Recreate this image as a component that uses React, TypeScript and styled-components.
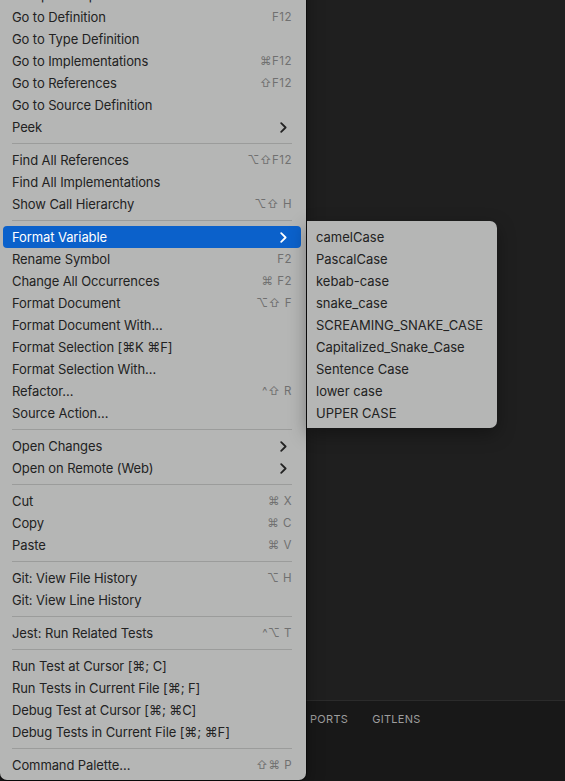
import React from "react";
import styled, { createGlobalStyle } from "styled-components";

const Global = createGlobalStyle`
  html, body { margin: 0; padding: 0; background: #1f1f1f; }
  body { font-family: Inter, "Noto Sans", "DejaVu Sans", sans-serif; }
`;

const Screen = styled.div`
  position: relative;
  width: 565px;
  height: 781px;
  overflow: hidden;
  display: flex;
  flex-direction: column;
  background: #1f1f1f;
`;

const Editor = styled.div`
  flex: 1;
  background: #1f1f1f;
`;

const Panel = styled.div`
  height: 80px;
  border-top: 1px solid #2b2b2b;
  background: #181818;
`;

const PanelTabs = styled.div`
  display: flex;
  gap: 24px;
  padding: 11px 0 0 310px;
  font-family: Inter, "Noto Sans", sans-serif;
  font-size: 11px;
  letter-spacing: 0.3px;
  color: #9d9d9d;
`;

const Menu = styled.div`
  position: absolute;
  left: 0;
  top: -20px;
  width: 306px;
  box-sizing: border-box;
  padding: 4px 5px 4px 3px;
  background: #b5b6b5;
  border-radius: 0 0 7px 7px;
  box-shadow: 0 0 0 1px rgba(0, 0, 0, 0.45), 0 6px 18px rgba(0, 0, 0, 0.35);
`;

const SubMenu = styled.div`
  position: absolute;
  left: 307px;
  top: 221px;
  width: 190px;
  box-sizing: border-box;
  padding: 5px 4px 4px 0;
  background: #b5b6b5;
  border-radius: 0 7px 7px 0;
  box-shadow: 0 6px 18px rgba(0, 0, 0, 0.35);
`;

const Row = styled.div<{ $active?: boolean }>`
  height: 22px;
  display: flex;
  align-items: center;
  padding: 0 9px;
  border-radius: 4px;
  font-size: 13px;
  letter-spacing: -0.1px;
  color: ${(p) => (p.$active ? "#ffffff" : "#222222")};
  background: ${(p) => (p.$active ? "#0b61cb" : "transparent")};
  white-space: nowrap;
`;

const SubRow = styled(Row)`
  letter-spacing: 0;
`;

const Label = styled.span`
  flex: 1;
`;

const Shortcut = styled.span`
  font-size: 11.5px;
  color: #707070;
  font-family: Inter, "DejaVu Sans", sans-serif;
  letter-spacing: 0.5px;
`;

const Sep = styled.div`
  height: 11px;
  display: flex;
  align-items: center;
  padding: 0 9px;
  &::after {
    content: "";
    flex: 1;
    height: 1px;
    background: rgba(0, 0, 0, 0.14);
  }
`;

const ChevronBox = styled.span`
  display: flex;
  margin-right: 5px;
`;

const Spark = styled.span`
  display: inline-block;
  width: 6px;
  height: 6px;
  margin-right: 6px;
  border-radius: 2px;
  background: #e59a3a;
`;

const Chevron = ({ color }: { color: string }) => (
  <ChevronBox>
    <svg width="7" height="11" viewBox="0 0 7 11">
      <path d="M1.2 1.2 L5.6 5.5 L1.2 9.8" fill="none" stroke={color} strokeWidth="1.8" strokeLinecap="round" strokeLinejoin="round" />
    </svg>
  </ChevronBox>
);

type Item = { label: string; key?: string; sub?: boolean; active?: boolean };

const sections: Item[][] = [
  [
    { label: "Copilot: Explain This" },
    { label: "Go to Definition", key: "F12" },
    { label: "Go to Type Definition" },
    { label: "Go to Implementations", key: "⌘F12" },
    { label: "Go to References", key: "⇧F12" },
    { label: "Go to Source Definition" },
    { label: "Peek", sub: true },
  ],
  [
    { label: "Find All References", key: "⌥⇧F12" },
    { label: "Find All Implementations" },
    { label: "Show Call Hierarchy", key: "⌥⇧ H" },
  ],
  [
    { label: "Format Variable", sub: true, active: true },
    { label: "Rename Symbol", key: "F2" },
    { label: "Change All Occurrences", key: "⌘ F2" },
    { label: "Format Document", key: "⌥⇧ F" },
    { label: "Format Document With…" },
    { label: "Format Selection [⌘K ⌘F]" },
    { label: "Format Selection With…" },
    { label: "Refactor…", key: "^⇧ R" },
    { label: "Source Action…" },
  ],
  [
    { label: "Open Changes", sub: true },
    { label: "Open on Remote (Web)", sub: true },
  ],
  [
    { label: "Cut", key: "⌘ X" },
    { label: "Copy", key: "⌘ C" },
    { label: "Paste", key: "⌘ V" },
  ],
  [
    { label: "Git: View File History", key: "⌥ H" },
    { label: "Git: View Line History" },
  ],
  [{ label: "Jest: Run Related Tests", key: "^⌥ T" }],
  [
    { label: "Run Test at Cursor [⌘; C]" },
    { label: "Run Tests in Current File [⌘; F]" },
    { label: "Debug Test at Cursor [⌘; ⌘C]" },
    { label: "Debug Tests in Current File [⌘; ⌘F]" },
  ],
  [{ label: "Command Palette…", key: "⇧⌘ P" }],
];

const cases = [
  "camelCase",
  "PascalCase",
  "kebab-case",
  "snake_case",
  "SCREAMING_SNAKE_CASE",
  "Capitalized_Snake_Case",
  "Sentence Case",
  "lower case",
  "UPPER CASE",
];

export default function App() {
  return (
    <Screen>
      <Global />
      <Editor />
      <Panel>
        <PanelTabs>
          <span>PORTS</span>
          <span>GITLENS</span>
        </PanelTabs>
      </Panel>
      <Menu>
        {sections.map((sec, si) => (
          <React.Fragment key={si}>
            {si > 0 && <Sep />}
            {sec.map((it, ii) => (
              <Row key={ii} $active={it.active}>
                {si === 0 && ii === 0 && <Spark />}
                <Label>{it.label}</Label>
                {it.key && <Shortcut>{it.key}</Shortcut>}
                {it.sub && <Chevron color={it.active ? "#ffffff" : "#222222"} />}
              </Row>
            ))}
          </React.Fragment>
        ))}
      </Menu>
      <SubMenu>
        {cases.map((c) => (
          <SubRow key={c}>{c}</SubRow>
        ))}
      </SubMenu>
    </Screen>
  );
}
